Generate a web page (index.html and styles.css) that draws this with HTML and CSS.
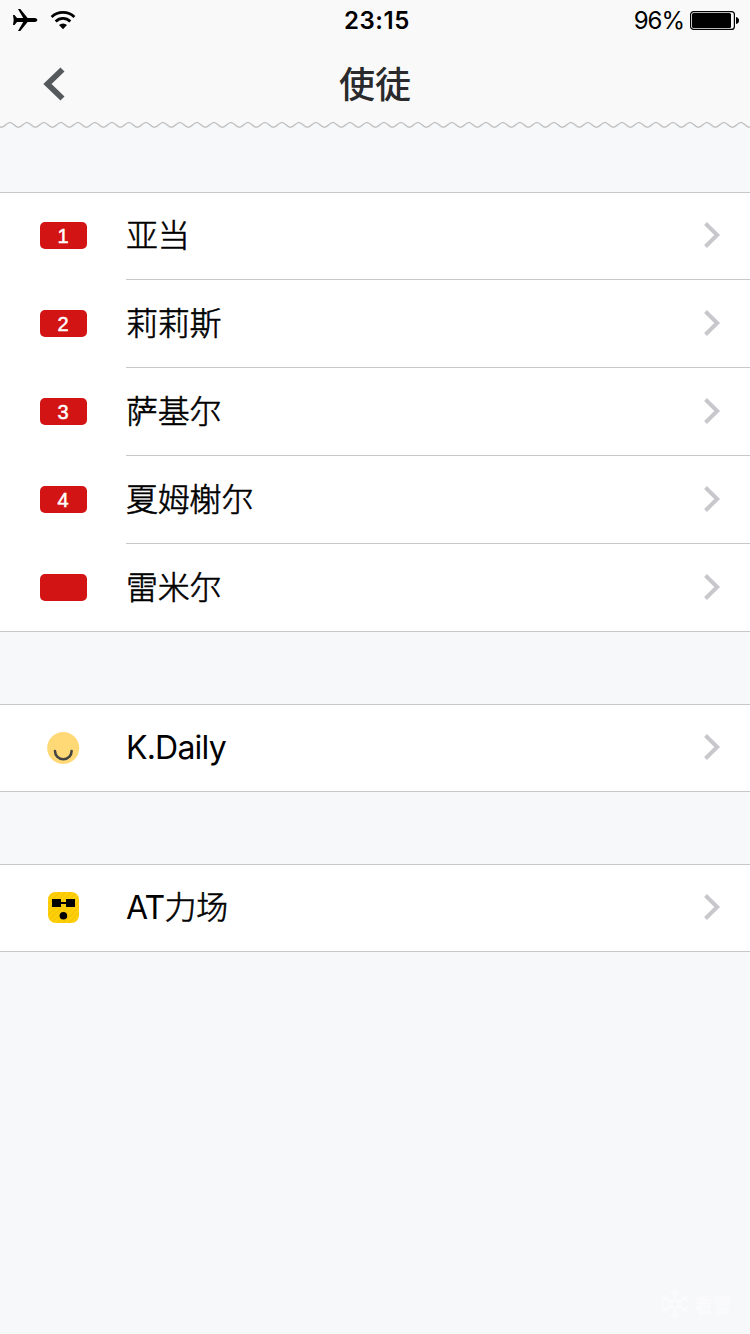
FILE: index.html
```html
<!DOCTYPE html>
<html lang="zh-CN">
<head>
    <meta charset="UTF-8">
    <meta name="viewport" content="width=device-width, initial-scale=1.0">
    <title>使徒</title>
    <link rel="stylesheet" href="styles.css">
</head>
<body>
    <!-- shared symbols -->
    <svg class="symbols" width="0" height="0">
        <symbol id="arrow" viewBox="0 0 18 28">
            <path d="M2.5 2.5 L14.2 14 L2.5 25.5" fill="none" stroke="#c7c7cc" stroke-width="4"/>
        </symbol>
    </svg>

    <header class="header">
        <div class="status-bar">
            <div class="status-left">
                <svg class="plane" width="25" height="24" viewBox="0 0 25 24">
                    <path d="M0 7 H1.5 L4 10.1 L10.2 10.1 L5 1 H7.3 L14.6 10.1 H22 Q24.4 10.4 24.4 12 Q24.4 13.6 22 13.9 H14.6 L7.3 23 H5 L10.2 13.9 L4 13.9 L1.5 17 H0 L0.7 12 Z"/>
                </svg>
                <svg class="wifi" width="26" height="20" viewBox="0 0 26 20">
                    <path d="M1.6 7 A16.5 16.5 0 0 1 24.4 7" fill="none" stroke="#000" stroke-width="2.8"/>
                    <path d="M5.7 11.4 A10.5 10.5 0 0 1 20.3 11.4" fill="none" stroke="#000" stroke-width="2.8"/>
                    <path d="M13 19.2 L9 15 A6 6 0 0 1 17 15 Z"/>
                </svg>
            </div>
            <div class="time">23:15</div>
            <div class="status-right">
                <span class="percent">96%</span>
                <svg class="battery" width="49" height="19" viewBox="0 0 49 19">
                    <rect x="0.6" y="0.6" width="43.8" height="17.8" rx="3" fill="none" stroke="#000" stroke-width="1.2"/>
                    <rect x="2" y="2" width="39" height="15" rx="1.5"/>
                    <path d="M46 6 Q49 6.5 49 9.5 Q49 12.5 46 13 Z"/>
                </svg>
            </div>
        </div>
        <nav class="nav-bar">
            <svg class="back" width="24" height="34" viewBox="0 0 24 34">
                <path d="M19.5 2.5 L4.5 17 L19.5 31.5" fill="none" stroke="#55595c" stroke-width="5.8"/>
            </svg>
            <h1 class="title">使徒</h1>
            <span class="nav-side"></span>
        </nav>
        <!-- wavy edge -->
        <svg class="wave" width="750" height="8">
            <defs>
                <pattern id="wave" x="1.4" width="17" height="8" patternUnits="userSpaceOnUse">
                    <path d="M0 0 V6.3 C3.3 6.3 5.2 1.5 8.5 1.5 S13.7 6.3 17 6.3 V0 Z" fill="#f9f9f9"/>
                    <path d="M-1 6.3 H0 C3.3 6.3 5.2 1.5 8.5 1.5 S13.7 6.3 17 6.3 H18" fill="none" stroke="#adadad" stroke-width="1.1"/>
                </pattern>
            </defs>
            <rect width="750" height="8" fill="url(#wave)"/>
        </svg>
    </header>

    <main class="content">
        <ul class="group">
            <li class="row">
                <span class="icon"><span class="badge">1</span></span>
                <div class="cell"><span class="label">亚当</span><svg class="arrow"><use href="#arrow"/></svg></div>
            </li>
            <li class="row">
                <span class="icon"><span class="badge">2</span></span>
                <div class="cell"><span class="label">莉莉斯</span><svg class="arrow"><use href="#arrow"/></svg></div>
            </li>
            <li class="row">
                <span class="icon"><span class="badge">3</span></span>
                <div class="cell"><span class="label">萨基尔</span><svg class="arrow"><use href="#arrow"/></svg></div>
            </li>
            <li class="row">
                <span class="icon"><span class="badge">4</span></span>
                <div class="cell"><span class="label">夏姆榭尔</span><svg class="arrow"><use href="#arrow"/></svg></div>
            </li>
            <li class="row">
                <span class="icon"><span class="badge"></span></span>
                <div class="cell"><span class="label">雷米尔</span><svg class="arrow"><use href="#arrow"/></svg></div>
            </li>
        </ul>

        <ul class="group">
            <li class="row">
                <span class="icon">
                    <svg width="33" height="32" viewBox="0 0 33 32">
                        <circle cx="16.2" cy="16" r="16" fill="#ffd976"/>
                        <path d="M8 19 A8.3 8.3 0 0 0 24.6 19" fill="none" stroke="#444" stroke-width="2.6" stroke-linecap="round"/>
                    </svg>
                </span>
                <div class="cell"><span class="label latin">K.Daily</span><svg class="arrow"><use href="#arrow"/></svg></div>
            </li>
        </ul>

        <ul class="group">
            <li class="row">
                <span class="icon">
                    <svg width="31" height="31" viewBox="0 0 31 31">
                        <defs>
                            <pattern id="stripes" width="4" height="4" patternUnits="userSpaceOnUse" patternTransform="rotate(45)">
                                <rect width="4" height="4" fill="#ffcf0a"/>
                                <rect width="1" height="4" fill="#f5c400"/>
                            </pattern>
                        </defs>
                        <rect width="31" height="31" rx="7.5" fill="url(#stripes)"/>
                        <path d="M4 7 H13 V10 H18 V7 H27 V15 H18 V12 H13 V15 H4 Z"/>
                        <circle cx="15.4" cy="23.7" r="3.8"/>
                    </svg>
                </span>
                <div class="cell"><span class="label"><span class="latin">AT</span>力场</span><svg class="arrow"><use href="#arrow"/></svg></div>
            </li>
        </ul>
    </main>

    <footer class="footer">
        <svg width="28" height="32" viewBox="-14 -16 28 32" fill="none" stroke="#fff" stroke-width="1.8">
            <path d="M0 -15 V-4 M0 4 V15 M-13 -7.5 L-3.5 -2 M3.5 2 L13 7.5 M-13 7.5 L-3.5 2 M3.5 -2 L13 -7.5"/>
            <path d="M0 -4 L3.5 -2 V2 L0 4 L-3.5 2 V-2 Z"/>
            <path d="M-4 -13 L0 -9 L4 -13 M-4 13 L0 9 L4 13 M-13 -3 L-8 -4.5 L-9 -10 M13 3 L8 4.5 L9 10 M-13 3 L-8 4.5 L-9 10 M13 -3 L8 -4.5 L9 -10"/>
        </svg>
        <span>看雪</span>
    </footer>
</body>
</html>
```
FILE: styles.css
```css
* {
    box-sizing: border-box;
}

body {
    margin: 0;
    min-height: 1334px;
    display: flex;
    flex-direction: column;
    background: #f7f8fa;
    color: #000;
    font-family: Inter, "Noto Sans CJK SC", sans-serif;
}

svg {
    display: block;
    flex: none;
}

.symbols {
    height: 0;
}

/* status bar */
.status-bar {
    height: 40px;
    display: grid;
    grid-template-columns: 1fr auto 1fr;
    align-items: center;
    padding: 0 11px 0 13px;
    background: #f9f9f9;
    font-size: 24px;
    line-height: 38px;
}

.status-left,
.status-right {
    display: flex;
    align-items: center;
}

.status-left {
    gap: 12px;
}

.status-right {
    justify-content: flex-end;
    gap: 6px;
}

.time {
    padding: 2px 0 0 2px;
    font-weight: 600;
    letter-spacing: 0.6px;
}

.percent {
    padding-top: 2px;
    letter-spacing: -1px;
}

/* nav */
.nav-bar {
    height: 81px;
    display: flex;
    align-items: center;
    justify-content: space-between;
    padding: 0 43px;
    background: #f9f9f9;
}

.back {
    margin-top: 6px;
}

.nav-side {
    width: 24px;
}

.title {
    margin: 0;
    padding-top: 9px;
    color: #2a2a2c;
    font-size: 36px;
    font-weight: 500;
    line-height: 50px;
}

/* list */
.content {
    flex: 1;
    display: flex;
    flex-direction: column;
    gap: 72px;
    padding-top: 63px;
}

.group {
    margin: 0;
    padding: 0;
    list-style: none;
    background: #fff;
    border-bottom: 1px solid #c8c7cc;
    box-shadow: inset 0 1px #c8c7cc;
}

.row {
    height: 88px;
    display: flex;
}

.row:last-child {
    height: 87px;
}

.icon {
    width: 126px;
    height: 87px;
    display: flex;
    align-items: center;
    justify-content: center;
}

.badge {
    width: 47px;
    height: 27px;
    border-radius: 5px;
    background: #d31414;
    color: #fff;
    font-family: "Liberation Sans", sans-serif;
    font-size: 20px;
    line-height: 28px;
    text-align: center;
    -webkit-text-stroke: 0.5px #fff;
}

.cell {
    flex: 1;
    display: flex;
    align-items: center;
    justify-content: space-between;
    padding-right: 29px;
    border-bottom: 1px solid #c8c7cc;
}

.row:last-child .cell {
    border-bottom: none;
}

.label {
    font-size: 32px;
    font-weight: 300;
    line-height: 44px;
    letter-spacing: -0.2px;
    -webkit-text-stroke: 0.6px #000;
}

.latin {
    font-weight: 400;
    letter-spacing: -0.8px;
    -webkit-text-stroke: 0;
}

.arrow {
    width: 18px;
    height: 28px;
    margin-bottom: 1px;
}

.footer {
    display: flex;
    justify-content: flex-end;
    align-items: center;
    gap: 5px;
    padding: 0 18px 14px 0;
    color: #fff;
    font-size: 19px;
    font-weight: bold;
    opacity: 0.5;
}
```
